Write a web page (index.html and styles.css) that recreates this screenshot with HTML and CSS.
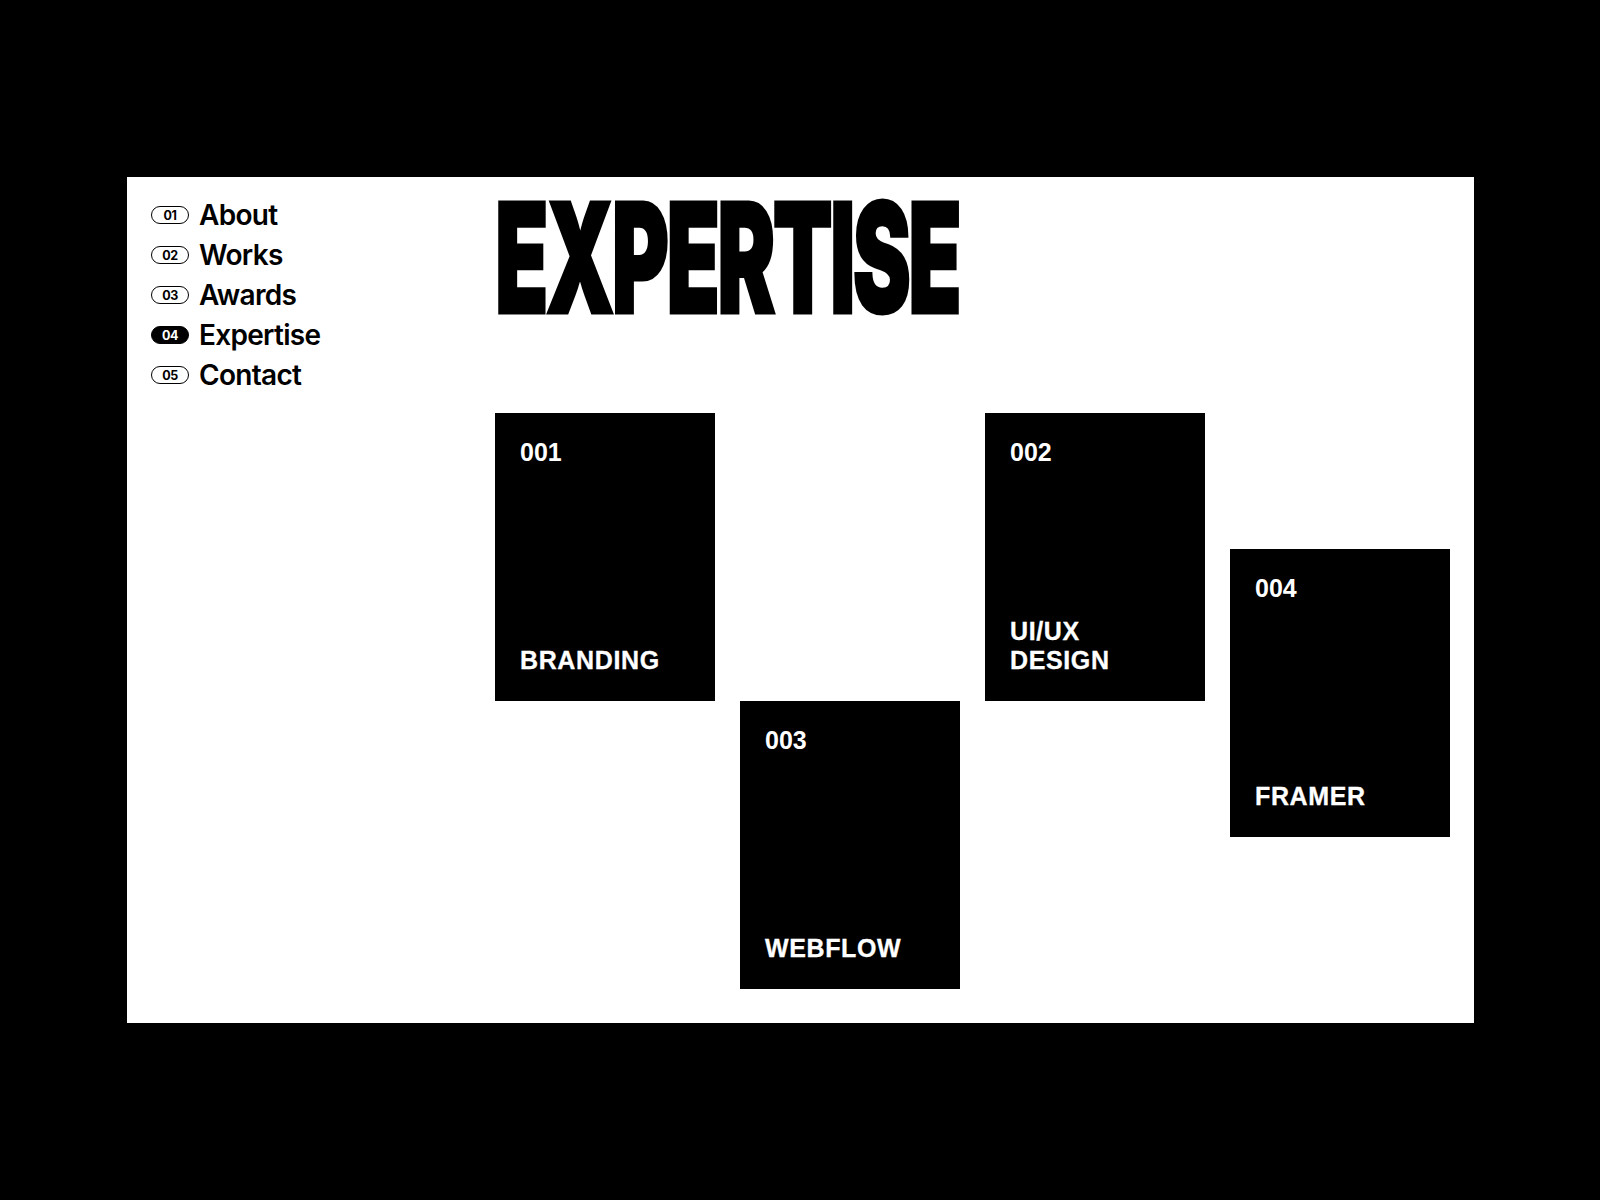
FILE: index.html
```html
<!DOCTYPE html>
<html lang="en">
<head>
<meta charset="utf-8">
<title>Expertise</title>
<link rel="stylesheet" href="styles.css">
</head>
<body>
<div class="panel">
  <nav class="nav">
    <a class="nav-item"><span class="pill">01</span><span class="nav-label">About</span></a>
    <a class="nav-item"><span class="pill">02</span><span class="nav-label">Works</span></a>
    <a class="nav-item"><span class="pill">03</span><span class="nav-label">Awards</span></a>
    <a class="nav-item active"><span class="pill">04</span><span class="nav-label">Expertise</span></a>
    <a class="nav-item"><span class="pill">05</span><span class="nav-label">Contact</span></a>
  </nav>
  <main class="main">
    <h1 class="title"><span class="title-text">EXPERTISE</span></h1>
    <div class="cards">
      <div class="card c1"><div class="num">001</div><div class="label">BRANDING</div></div>
      <div class="card c2"><div class="num">002</div><div class="label">UI/UX<br>DESIGN</div></div>
      <div class="card c3"><div class="num">003</div><div class="label">WEBFLOW</div></div>
      <div class="card c4"><div class="num">004</div><div class="label">FRAMER</div></div>
    </div>
  </main>
</div>
</body>
</html>
```
FILE: styles.css
```css
html, body {
  margin: 0;
  padding: 0;
  background: #000;
}
body {
  width: 1600px;
  height: 1200px;
  padding: 177px 0 0 127px;
  box-sizing: border-box;
}
.panel {
  width: 1347px;
  height: 846px;
  background: #fff;
  box-sizing: border-box;
  padding: 0 24px;
  display: grid;
  grid-template-columns: 344px 1fr;
  align-items: start;
}
.nav {
  display: flex;
  flex-direction: column;
  padding-top: 18px;
}
.nav-item {
  display: flex;
  align-items: center;
  height: 40px;
  color: #000;
  text-decoration: none;
  font-family: "Inter", "Liberation Sans", sans-serif;
}
.pill {
  box-sizing: border-box;
  width: 38px;
  height: 18px;
  border: 1.3px solid #000;
  border-radius: 9px;
  display: flex;
  align-items: center;
  justify-content: center;
  font-size: 12.5px;
  font-weight: 700;
  letter-spacing: -0.03em;
  margin-right: 10px;
  padding-top: 1px;
}
.active .pill {
  background: #000;
  color: #fff;
}
.nav-label {
  font-size: 28px;
  font-weight: 600;
  letter-spacing: -0.025em;
  line-height: 1;
}
.main {
  padding-top: 16px;
}
.title {
  margin: 0;
  height: 130px;
  line-height: 130px;
  font-family: "Inter", "Liberation Sans", sans-serif;
  font-weight: 900;
  font-size: 153px;
  letter-spacing: -0.03em;
  white-space: nowrap;
}
.title-text {
  display: inline-block;
  transform: scaleX(0.57);
  transform-origin: left center;
  -webkit-text-stroke: 3px #000;
}
.cards {
  margin-top: 90px;
  display: grid;
  grid-template-columns: repeat(4, 220px);
  column-gap: 25px;
  align-items: start;
}
.card {
  grid-row: 1;
  height: 288px;
  box-sizing: border-box;
  background: #000;
  color: #fff;
  padding: 25px 25px 26px;
  display: flex;
  flex-direction: column;
  justify-content: space-between;
  font-family: "Liberation Sans", Arial, sans-serif;
  font-weight: 700;
  font-size: 25px;
  line-height: 29px;
}
.num {
  letter-spacing: 0;
}
.label {
  letter-spacing: 0.025em;
  -webkit-text-stroke: 0.3px #fff;
}
.c1 { grid-column: 1; }
.c3 { grid-column: 2; margin-top: 288px; }
.c2 { grid-column: 3; }
.c4 { grid-column: 4; margin-top: 136px; }
```
